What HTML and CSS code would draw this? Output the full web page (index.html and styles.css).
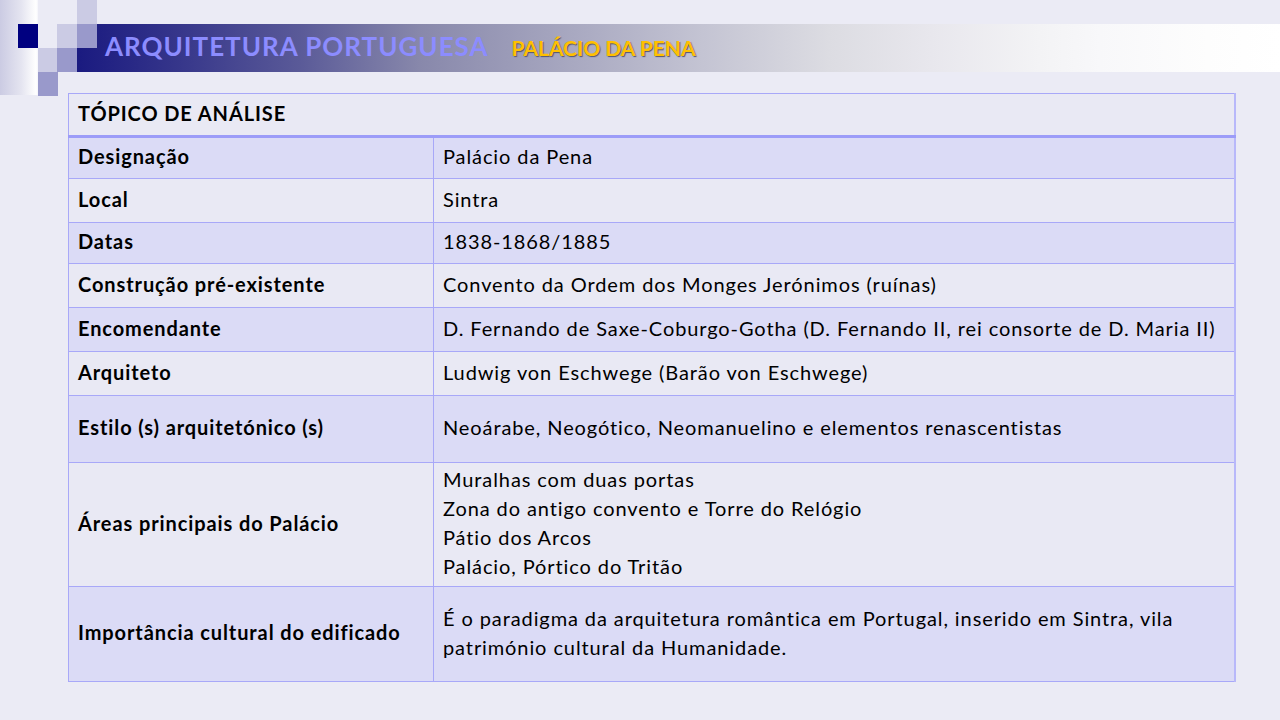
FILE: index.html
```html
<!DOCTYPE html>
<html lang="pt">
<head>
  <meta charset="UTF-8">
  <title>Arquitetura Portuguesa - Palácio da Pena</title>
  <link rel="stylesheet" href="styles.css">
</head>
<body>

<header class="title-area">
  <div class="deco">
    <span class="sq sq-navy" style="left:18px;top:24px"></span>
    <span class="sq sq-light" style="left:77px;top:0"></span>
    <span class="sq sq-light" style="left:57px;top:24px"></span>
    <span class="sq sq-mid" style="left:77px;top:24px"></span>
    <span class="sq sq-light" style="left:38px;top:48px"></span>
    <span class="sq sq-mid" style="left:57px;top:48px"></span>
    <span class="sq sq-mid" style="left:38px;top:72px"></span>
  </div>
  <div class="banner">
    <h1>ARQUITETURA PORTUGUESA</h1>
    <span class="subtitle">PALÁCIO DA PENA</span>
  </div>
</header>

<table class="analysis">
  <tr class="head">
    <th colspan="2">TÓPICO DE ANÁLISE</th>
  </tr>
  <tr class="alt" style="height:42px">
    <td class="key">Designação</td>
    <td>Palácio da Pena</td>
  </tr>
  <tr style="height:44px">
    <td class="key">Local</td>
    <td>Sintra</td>
  </tr>
  <tr class="alt" style="height:41px">
    <td class="key">Datas</td>
    <td>1838-1868/1885</td>
  </tr>
  <tr style="height:44px">
    <td class="key">Construção pré-existente</td>
    <td>Convento da Ordem dos Monges Jerónimos (ruínas)</td>
  </tr>
  <tr class="alt" style="height:44px">
    <td class="key">Encomendante</td>
    <td>D. Fernando de Saxe-Coburgo-Gotha (D. Fernando II, rei consorte de D. Maria II)</td>
  </tr>
  <tr style="height:44px">
    <td class="key">Arquiteto</td>
    <td>Ludwig von Eschwege (Barão von Eschwege)</td>
  </tr>
  <tr class="alt" style="height:67px">
    <td class="key">Estilo (s) arquitetónico (s)</td>
    <td>Neoárabe, Neogótico, Neomanuelino e elementos renascentistas</td>
  </tr>
  <tr style="height:124px">
    <td class="key">Áreas principais do Palácio</td>
    <td>Muralhas com duas portas<br>Zona do antigo convento e Torre do Relógio<br>Pátio dos Arcos<br>Palácio, Pórtico do Tritão</td>
  </tr>
  <tr class="alt" style="height:95px">
    <td class="key">Importância cultural do edificado</td>
    <td>É o paradigma da arquitetura romântica em Portugal, inserido em Sintra, vila património cultural da Humanidade.</td>
  </tr>
</table>

</body>
</html>
```

FILE: styles.css
```css
body {
  margin: 0;
  background: #ebebf5;
  font-family: Lato, "Open Sans", sans-serif;
  color: #000;
  width: 1280px;
  height: 720px;
  overflow: hidden;
}
.title-area {
  position: relative;
  height: 69px;
  padding-top: 24px;
}
.deco {
  position: absolute;
  left: 0;
  top: 0;
  width: 38px;
  height: 95px;
  background: linear-gradient(to right, #cbcbe3, #e4e4f0 55%, #ffffff 95%, #f4f4fa);
}
.sq {
  position: absolute;
  width: 20px;
  height: 24px;
  z-index: 2;
}
.sq-navy {
  background: #000080;
}
.sq-light {
  background: #cbcbe4;
}
.sq-mid {
  background: #9999cb;
}
.banner {
  display: flex;
  align-items: center;
  margin-left: 77px;
  height: 44px;
  padding: 0 0 4px 28px;
  background: linear-gradient(to right, #1a1a80 0%, #2a2a86 5%, #5a5a98 18.5%, #8888ab 28.5%, #c4c4d3 52%, #dcdce2 62.5%, #e8e7ed 71%, #f3f3f5 80%, #f8f8fa 85%, #fdfdfd 94%, #ffffff 100%);
}
.banner h1 {
  margin: 0;
  font-size: 26px;
  font-weight: bold;
  letter-spacing: 1px;
  color: #8c8cff;
}
.subtitle {
  margin-left: 23px;
  margin-top: 2px;
  font-size: 21px;
  font-weight: bold;
  color: #ffc000;
  text-shadow: 1px 1px 1px #55556a;
}
.analysis {
  margin-left: 68px;
  width: 1168px;
  border-collapse: collapse;
  border: 1px solid #a8a8f8;
  border-right: 2px solid #b8b8fa;
  font-size: 20px;
  line-height: 29px;
  letter-spacing: 0.9px;
}
.analysis th {
  height: 38px;
  text-align: left;
  font-weight: bold;
  padding: 0 9px 3px;
  background: #e9e9f4;
  border-bottom: 3px solid #9c9cf8;
}
.analysis td {
  padding: 0 9px 3px;
  border: 1px solid #a8a8f8;
  background: #e9e9f4;
  vertical-align: middle;
}
.analysis tr.alt td {
  background: #dbdbf6;
}
.analysis td.key {
  width: 346px;
  font-weight: bold;
}
```
